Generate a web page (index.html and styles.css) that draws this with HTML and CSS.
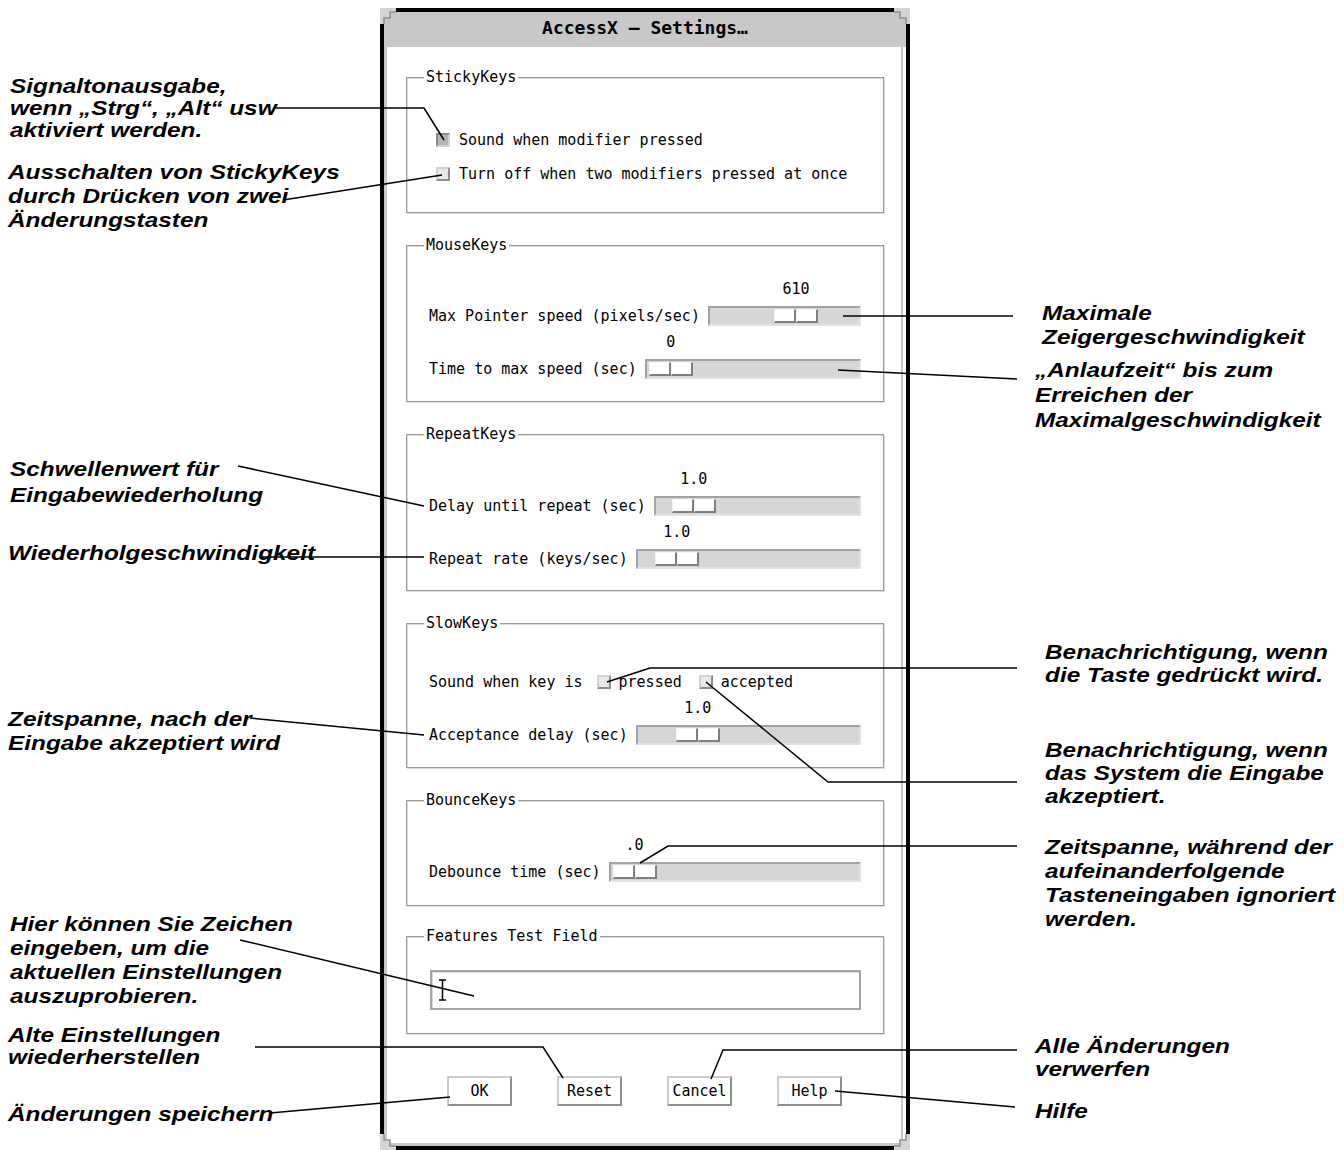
FILE: index.html
```html
<!DOCTYPE html>
<html lang="de">
<head>
    <meta charset="UTF-8">
    <meta name="viewport" content="width=device-width, initial-scale=1.0">
    <title>AccessX – Settings…</title>
    <link rel="stylesheet" href="styles.css">
</head>
<body>
<div class="page">

    <!-- Erklärungen links -->
    <div class="note note-a1">Signaltonausgabe,<br>wenn „Strg“, „Alt“ usw<br>aktiviert werden.</div>
    <div class="note note-a2">Ausschalten von StickyKeys<br>durch Drücken von zwei<br>Änderungstasten</div>
    <div class="note note-a3">Schwellenwert für<br>Eingabewiederholung</div>
    <div class="note note-a4">Wiederholgeschwindigkeit</div>
    <div class="note note-a5">Zeitspanne, nach der<br>Eingabe akzeptiert wird</div>
    <div class="note note-a6">Hier können Sie Zeichen<br>eingeben, um die<br>aktuellen Einstellungen<br>auszuprobieren.</div>
    <div class="note note-a7">Alte Einstellungen<br>wiederherstellen</div>
    <div class="note note-a8">Änderungen speichern</div>

    <!-- Erklärungen rechts -->
    <div class="note note-b1">Maximale<br>Zeigergeschwindigkeit</div>
    <div class="note note-b2">„Anlaufzeit“ bis zum<br>Erreichen der<br>Maximalgeschwindigkeit</div>
    <div class="note note-b3">Benachrichtigung, wenn<br>die Taste gedrückt wird.</div>
    <div class="note note-b4">Benachrichtigung, wenn<br>das System die Eingabe<br>akzeptiert.</div>
    <div class="note note-b5">Zeitspanne, während der<br>aufeinanderfolgende<br>Tasteneingaben ignoriert<br>werden.</div>
    <div class="note note-b6">Alle Änderungen<br>verwerfen</div>
    <div class="note note-b7">Hilfe</div>

    <div class="window">
        <svg class="corner corner-tl" width="16" height="16"><path d="M0 0h16v4H10v6H4v6H0z" fill="#d4d4d4"/><path d="M4 16V10h6V4h6" fill="none" stroke="#8e8e8e" stroke-width="1.5"/></svg>
        <svg class="corner corner-tr" width="16" height="16"><path d="M0 0h16v4H10v6H4v6H0z" fill="#d4d4d4"/><path d="M4 16V10h6V4h6" fill="none" stroke="#8e8e8e" stroke-width="1.5"/></svg>
        <svg class="corner corner-bl" width="16" height="16"><path d="M0 0h16v4H10v6H4v6H0z" fill="#d4d4d4"/><path d="M4 16V10h6V4h6" fill="none" stroke="#8e8e8e" stroke-width="1.5"/></svg>
        <svg class="corner corner-br" width="16" height="16"><path d="M0 0h16v4H10v6H4v6H0z" fill="#d4d4d4"/><path d="M4 16V10h6V4h6" fill="none" stroke="#8e8e8e" stroke-width="1.5"/></svg>

        <div class="titlebar">AccessX – Settings…</div>

        <div class="window-body">
            <div class="group group-sticky">
                <span class="group-title">StickyKeys</span>
                <div class="check-row"><span class="check on"></span>Sound when modifier pressed</div>
                <div class="check-row"><span class="check"></span>Turn off when two modifiers pressed at once</div>
            </div>

            <div class="group group-mouse">
                <span class="group-title">MouseKeys</span>
                <div class="scale">
                    <span class="scale-label">Max Pointer speed (pixels/sec)</span>
                    <div class="scale-track">
                        <div class="scale-value" style="margin-left:66px">610</div>
                        <div class="trough"><div class="thumb" style="margin-left:64px"><span></span><span></span></div></div>
                    </div>
                </div>
                <div class="scale">
                    <span class="scale-label">Time to max speed (sec)</span>
                    <div class="scale-track">
                        <div class="scale-value" style="margin-left:4px">0</div>
                        <div class="trough"><div class="thumb" style="margin-left:2px"><span></span><span></span></div></div>
                    </div>
                </div>
            </div>

            <div class="group group-repeat">
                <span class="group-title">RepeatKeys</span>
                <div class="scale">
                    <span class="scale-label">Delay until repeat (sec)</span>
                    <div class="scale-track">
                        <div class="scale-value" style="margin-left:18px">1.0</div>
                        <div class="trough"><div class="thumb" style="margin-left:16px"><span></span><span></span></div></div>
                    </div>
                </div>
                <div class="scale">
                    <span class="scale-label">Repeat rate (keys/sec)</span>
                    <div class="scale-track">
                        <div class="scale-value" style="margin-left:19px">1.0</div>
                        <div class="trough"><div class="thumb" style="margin-left:17px"><span></span><span></span></div></div>
                    </div>
                </div>
            </div>

            <div class="group group-slow">
                <span class="group-title">SlowKeys</span>
                <div class="check-row slow-row">
                    <span class="slow-label">Sound when key is</span>
                    <span class="check"></span><span class="slow-opt">pressed</span>
                    <span class="check"></span><span>accepted</span>
                </div>
                <div class="scale">
                    <span class="scale-label">Acceptance delay (sec)</span>
                    <div class="scale-track">
                        <div class="scale-value" style="margin-left:40px">1.0</div>
                        <div class="trough"><div class="thumb" style="margin-left:38px"><span></span><span></span></div></div>
                    </div>
                </div>
            </div>

            <div class="group group-bounce">
                <span class="group-title">BounceKeys</span>
                <div class="scale">
                    <span class="scale-label">Debounce time (sec)</span>
                    <div class="scale-track">
                        <div class="scale-value" style="margin-left:4px">.0</div>
                        <div class="trough"><div class="thumb" style="margin-left:2px"><span></span><span></span></div></div>
                    </div>
                </div>
            </div>

            <div class="group group-test">
                <span class="group-title">Features Test Field</span>
                <div class="test-input">
                    <svg class="ibeam" width="9" height="22"><path d="M1 1h7M4.5 1v20M1 21h7" fill="none" stroke="#000" stroke-width="1.5"/></svg>
                </div>
            </div>

            <div class="buttons">
                <button class="btn">OK</button>
                <button class="btn">Reset</button>
                <button class="btn">Cancel</button>
                <button class="btn">Help</button>
            </div>
        </div>
    </div>

    <svg class="leaders" width="1344" height="1150">
        <polyline points="276,108 424,108 444,140"/>
        <polyline points="283,200 442,175"/>
        <polyline points="843,316 1013,316"/>
        <polyline points="838,370 1017,379"/>
        <polyline points="238,466 424,506"/>
        <polyline points="262,557 424,557"/>
        <polyline points="1017,668 650,668 607,682"/>
        <polyline points="1017,782 828,782 706,682"/>
        <polyline points="250,718 424,735"/>
        <polyline points="1017,846 668,846 640,863"/>
        <polyline points="240,940 474,996"/>
        <polyline points="255,1047 543,1047 563,1078"/>
        <polyline points="270,1113 450,1097"/>
        <polyline points="1017,1050 723,1050 711,1079"/>
        <polyline points="835,1091 1015,1107"/>
    </svg>
</div>
</body>
</html>
```

FILE: styles.css
```css
* {
    box-sizing: border-box;
}
body {
    margin: 0;
    background: #fff;
    color: #000;
    font-family: "DejaVu Sans Mono", monospace;
    font-size: 15px;
}
.page {
    position: relative;
    width: 1344px;
    height: 1150px;
    overflow: hidden;
}

/* Fenster */
.window {
    position: relative;
    width: 530px;
    margin: 8px 0 0 380px;
    border: 4px solid #000;
}
.corner {
    position: absolute;
    z-index: 2;
}
.corner-tl {
    left: -4px;
    top: -4px;
}
.corner-tr {
    right: -4px;
    top: -4px;
    transform: scaleX(-1);
}
.corner-bl {
    left: -4px;
    bottom: -4px;
    transform: scaleY(-1);
}
.corner-br {
    right: -4px;
    bottom: -4px;
    transform: scale(-1, -1);
}
.titlebar {
    height: 35px;
    padding-bottom: 4px;
    background: #c8c8c8;
    display: flex;
    align-items: center;
    justify-content: center;
    font-size: 18px;
    font-weight: bold;
}
.window-body {
    height: 1099px;
    padding: 30px 22px 0;
    display: flex;
    flex-direction: column;
    box-shadow: inset 3px 0 0 #c8c8c8, inset -3px 0 0 #fff, inset -5px 0 0 #c8c8c8, inset 0 -3px 0 #c8c8c8;
}

/* Gruppen */
.group {
    position: relative;
    flex-shrink: 0;
    display: flex;
    flex-direction: column;
    gap: 7px;
    padding: 0 22px;
    border: 1px solid #9a9a9a;
    box-shadow: inset 1px 1px 0 #dcdcdc, 1px 1px 0 #dcdcdc;
}
.group + .group {
    margin-top: 32px;
}
.group-title {
    position: absolute;
    top: -10px;
    left: 17px;
    padding: 0 2px;
    background: #fff;
    line-height: 18px;
}
.group-sticky {
    height: 136px;
    padding-top: 52px;
    padding-left: 29px;
    gap: 14px;
}
.group-mouse {
    height: 157px;
    padding-top: 34px;
}
.group-repeat {
    height: 157px;
    padding-top: 35px;
}
.group-slow {
    height: 145px;
    padding-top: 48px;
}
.group-bounce {
    height: 106px;
    padding-top: 35px;
}
.group + .group-test {
    height: 98px;
    padding-top: 33px;
    margin-top: 30px;
}

/* Checkboxen */
.check-row {
    display: flex;
    align-items: center;
    height: 20px;
    gap: 9px;
    white-space: nowrap;
}
.check {
    width: 14px;
    height: 14px;
    flex-shrink: 0;
    background: #e8e8e8;
    border: 2px solid;
    border-color: #d2d2d2 #8c8c8c #8c8c8c #d2d2d2;
}
.check.on {
    background: #b4b4b4;
    border-color: #8a8a8a #d2d2d2 #d2d2d2 #8a8a8a;
}
.slow-row {
    gap: 8px;
}
.slow-label {
    margin-right: 6px;
}
.slow-opt {
    margin-right: 9px;
}

/* Schieberegler */
.scale {
    display: flex;
    align-items: flex-end;
    gap: 8px;
}
.scale-label {
    line-height: 20px;
    white-space: nowrap;
}
.scale-track {
    flex: 1;
    display: flex;
    flex-direction: column;
}
.scale-value {
    width: 44px;
    height: 18px;
    line-height: 18px;
    margin-bottom: 8px;
    text-align: center;
}
.trough {
    height: 20px;
    display: flex;
    align-items: center;
    background: #d6d6d6;
    border: 2px solid;
    border-color: #a2a2a2 #e2e2e2 #e2e2e2 #a2a2a2;
}
.thumb {
    display: flex;
}
.thumb span {
    width: 22px;
    height: 14px;
    background: #fff;
    border-style: solid;
    border-width: 1px 2px 2px 1px;
    border-color: #f4f4f4 #7e7e7e #7e7e7e #f4f4f4;
}

/* Testfeld */
.test-input {
    width: 431px;
    height: 40px;
    margin-left: 1px;
    display: flex;
    align-items: center;
    padding-left: 6px;
    border: 2px solid #a4a4a4;
    box-shadow: inset 1px 1px 0 #d8d8d8;
}

/* Knöpfe */
.buttons {
    display: flex;
    gap: 45px;
    margin-top: 42px;
    padding-left: 41px;
}
.btn {
    width: 65px;
    height: 30px;
    padding: 0;
    background: #fff;
    color: #000;
    font-family: "DejaVu Sans Mono", monospace;
    font-size: 15px;
    border: 2px solid;
    border-color: #cccccc #8e8e8e #8e8e8e #cccccc;
}

/* Erklärungen: im Original breiter gezogen */
.note {
    position: absolute;
    font-family: "Liberation Sans", Arial, sans-serif;
    font-size: 21px;
    font-weight: bold;
    font-style: italic;
    line-height: 24px;
    white-space: nowrap;
    transform: scaleX(1.16);
    transform-origin: 0 0;
}
.note-a1 { left: 10px; top: 75px; line-height: 22px; }
.note-a2 { left: 8px; top: 160px; }
.note-a3 { left: 10px; top: 456px; line-height: 26px; }
.note-a4 { left: 8px; top: 541px; }
.note-a5 { left: 8px; top: 707px; }
.note-a6 { left: 10px; top: 912px; }
.note-a7 { left: 8px; top: 1024px; line-height: 22px; }
.note-a8 { left: 8px; top: 1102px; }
.note-b1 { left: 1042px; top: 301px; }
.note-b2 { left: 1035px; top: 357px; line-height: 25px; }
.note-b3 { left: 1045px; top: 640px; line-height: 23px; }
.note-b4 { left: 1045px; top: 738px; line-height: 23px; }
.note-b5 { left: 1045px; top: 835px; }
.note-b6 { left: 1035px; top: 1034px; line-height: 23px; }
.note-b7 { left: 1035px; top: 1099px; }

.leaders {
    position: absolute;
    left: 0;
    top: 0;
    pointer-events: none;
}
.leaders polyline {
    fill: none;
    stroke: #000;
    stroke-width: 1.5;
}
```
